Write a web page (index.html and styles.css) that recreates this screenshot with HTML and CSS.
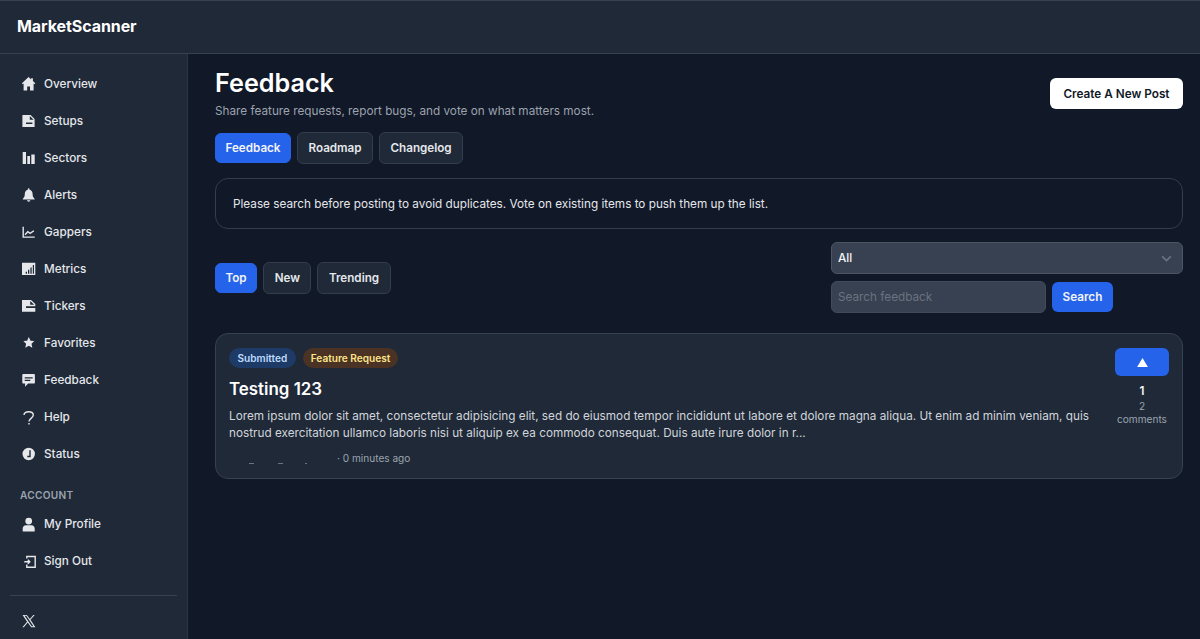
FILE: index.html
```html
<!doctype html>
<html lang="en">
  <head>
    <meta charset="utf-8">
    <title>Feedback - MarketScanner</title>
    <link rel="stylesheet" href="styles.css">
  </head>
  <body>
    <header class="topbar">
      <span class="brand">MarketScanner</span>
    </header>

    <div class="shell">
      <aside class="sidebar">
        <nav class="nav">
          <a class="nav-item" href="#">
            <svg class="nav-icon" viewBox="0 0 16 16"><path d="M8.600 1 1.900 7.300l.9 1 .8-.7v7h3.600v-4h2.800v4h3.600v-7l.8.7.9-1-2.400-2.300V2.200h-1.800v1.400z"/></svg>
            Overview
          </a>
          <a class="nav-item" href="#">
            <svg class="nav-icon" viewBox="0 0 16 16"><path fill-rule="evenodd" d="M2.400 2h8.200l4 4v8H2.400zM9.800 3v3.800h3.800zM6 9.400V11h6.400V9.400z"/></svg>
            Setups
          </a>
          <a class="nav-item" href="#">
            <svg class="nav-icon" viewBox="0 0 16 16"><path d="M2.700 2H6v12H2.700zM7.300 6H10v8H7.300zM11.300 4.500h3.400V14h-3.400z"/></svg>
            Sectors
          </a>
          <a class="nav-item" href="#">
            <svg class="nav-icon" viewBox="0 0 16 16"><path d="M8.700 1.300c.5 0 .9.400.9.900v.5c1.900.5 3 2.100 3 4.200 0 2.500.6 3.400 2 4.800v.9H2.800v-.9c1.400-1.400 2-2.300 2-4.800 0-2.100 1.100-3.700 3-4.200v-.5c0-.5.4-.9.900-.9zM7 13.300h3.400c-.1.900-.8 1.400-1.700 1.400S7.100 14.200 7 13.300z"/></svg>
            Alerts
          </a>
          <a class="nav-item" href="#">
            <svg class="nav-icon nav-icon-line" viewBox="0 0 16 16"><path d="M3.200 2.700v10.400h11.500M5 10.700l2.800-3 2.300 1.700 3.800-2.700"/></svg>
            Gappers
          </a>
          <a class="nav-item" href="#">
            <svg class="nav-icon" viewBox="0 0 16 16"><path fill-rule="evenodd" d="M2 1.800h13.300V14H2zM5.700 10.800v2h1.300v-2zM8 8.800v4h1.300v-4zM10.400 6.600v6.200h1.300V6.600zM12.800 4v8.800H14V4z"/></svg>
            Metrics
          </a>
          <a class="nav-item" href="#">
            <svg class="nav-icon" viewBox="0 0 16 16"><path fill-rule="evenodd" d="M2 2h9l4.300 4v7.700H2zM10.200 3v3.800h4zM6 8.300v1.700h9.300V8.300z"/></svg>
            Tickers
          </a>
          <a class="nav-item" href="#">
            <svg class="nav-icon" viewBox="0 0 16 16"><path d="m8.800 2 1.700 3.700 3.800.4-2.800 2.700.8 3.900-3.500-2-3.500 2 .8-3.900-2.800-2.700 3.800-.4z"/></svg>
            Favorites
          </a>
          <a class="nav-item" href="#">
            <svg class="nav-icon" viewBox="0 0 16 16"><path fill-rule="evenodd" d="M3.500 2h10.400c.7 0 1 .5 1 1.200v7.200c0 .7-.3 1.200-1 1.200H8.100l-3 3.100v-3.100H3.500c-.7 0-1.200-.5-1.200-1.200V3.200C2.300 2.500 2.800 2 3.500 2zM4.700 5.200v1.200h8V5.200zM4.700 7.800V9h5.600V7.800z"/></svg>
            Feedback
          </a>
          <a class="nav-item" href="#">
            <svg class="nav-icon nav-icon-line" viewBox="0 0 16 16"><path d="M4 6C4 4 6 2.800 8.500 2.800s4.800 1.200 4.800 3.300c0 2.800-4 3.200-4.300 6.400"/><path d="M9 14.100v1.300"/></svg>
            Help
          </a>
          <a class="nav-item" href="#">
            <svg class="nav-icon" viewBox="0 0 16 16"><path fill-rule="evenodd" d="M8.700 1.800a6.200 6.200 0 1 1 0 12.400 6.200 6.200 0 0 1 0-12.400zM9.300 4.300v5.500H7.300v1.500h3.400v-7z"/></svg>
            Status
          </a>
        </nav>

        <div class="nav-label">ACCOUNT</div>
        <nav class="nav">
          <a class="nav-item" href="#">
            <svg class="nav-icon" viewBox="0 0 16 16"><path d="M8.700 1.700a3.400 3.400 0 1 1 0 6.800 3.400 3.400 0 0 1 0-6.800zM2.700 15.600v-3c0-2 1.400-3.400 3.200-3.400h5.600c1.800 0 3.200 1.400 3.200 3.400v3z"/></svg>
            My Profile
          </a>
          <a class="nav-item" href="#">
            <svg class="nav-icon nav-icon-line" viewBox="0 0 16 16"><path d="M6.800 5.500V3.500h8.400v10.700H6.800V11.500M4.300 8.800h5.500M7.800 6.800l2 2-2 2"/></svg>
            Sign Out
          </a>
        </nav>

        <div class="sidebar-foot">
          <svg class="x-icon" viewBox="0 0 24 24"><path d="M1 1.500h7.300l5.100 6.900 6-6.900h2.400l-7.300 8.400L23 22.500h-7.300l-5.800-7.800-6.800 7.800H.7l8-9.300zm3.400 1.700 12.200 17.600h3L7.400 3.200z"/></svg>
        </div>
      </aside>

      <main class="main">
        <div class="page-head">
          <div>
            <h1 class="page-title">Feedback</h1>
            <p class="page-sub">Share feature requests, report bugs, and vote on what matters most.</p>
          </div>
          <button class="btn-create">Create A New Post</button>
        </div>

        <div class="tabs tabs-page">
          <a class="pill active" href="#">Feedback</a>
          <a class="pill" href="#">Roadmap</a>
          <a class="pill" href="#">Changelog</a>
        </div>

        <div class="notice">Please search before posting to avoid duplicates. Vote on existing items to push them up the list.</div>

        <div class="toolbar">
          <div class="tabs">
            <a class="pill active" href="#">Top</a>
            <a class="pill" href="#">New</a>
            <a class="pill" href="#">Trending</a>
          </div>
          <div class="filters">
            <div class="select">
              <span>All</span>
              <svg class="chevron" viewBox="0 0 12 12"><path d="M2 4l4 4 4-4"/></svg>
            </div>
            <div class="search-row">
              <input class="search-input" type="text" placeholder="Search feedback">
              <button class="btn-search">Search</button>
            </div>
          </div>
        </div>

        <article class="post">
          <div class="post-body">
            <div class="badges">
              <span class="badge badge-status">Submitted</span>
              <span class="badge badge-type">Feature Request</span>
            </div>
            <h2 class="post-title">Testing 123</h2>
            <p class="post-text">Lorem ipsum dolor sit amet, consectetur adipisicing elit, sed do eiusmod tempor incididunt ut labore et dolore magna aliqua. Ut enim ad minim veniam, quis nostrud exercitation ullamco laboris nisi ut aliquip ex ea commodo consequat. Duis aute irure dolor in r...</p>
            <div class="post-meta">
              <span class="author"><i></i><i></i><i></i></span>
              <span>· 0 minutes ago</span>
            </div>
          </div>
          <div class="vote">
            <button class="vote-btn"><svg viewBox="0 0 12 10"><path d="M6 0l6 10H0z"/></svg></button>
            <div class="vote-count">1</div>
            <div class="vote-comments">2<br>comments</div>
          </div>
        </article>
      </main>
    </div>
  </body>
</html>
```

FILE: styles.css
```css
html, body {
  margin: 0;
  height: 100%;
}

body {
  display: flex;
  flex-direction: column;
  height: 639px;
  overflow: hidden;
  background-color: #111827;
  color: #f3f4f6;
  font-family: Inter, "Liberation Sans", sans-serif;
}

.topbar {
  display: flex;
  align-items: center;
  flex: none;
  box-sizing: border-box;
  height: 54px;
  padding: 0 0 2px 17px;
  background-color: #1f2937;
  border-top: 1px solid #374151;
  border-bottom: 1px solid #374151;
}

.brand {
  color: #fff;
  font-size: 16px;
  font-weight: 700;
  letter-spacing: -0.005em;
}

.shell {
  display: flex;
  flex: 1;
  min-height: 0;
}

.sidebar {
  display: flex;
  flex-direction: column;
  flex: none;
  box-sizing: border-box;
  width: 188px;
  padding-top: 11px;
  background-color: #1f2937;
  border-right: 1px solid #2b3544;
}

.nav {
  display: flex;
  flex-direction: column;
}

.nav-item {
  display: flex;
  align-items: center;
  gap: 8px;
  height: 37px;
  padding-left: 20px;
  color: #e5e7eb;
  font-size: 11.750px;
  font-weight: 500;
  text-decoration: none;
}

.nav-icon {
  width: 16px;
  height: 16px;
  flex: none;
  fill: #e5e7eb;
}

.nav-icon-line {
  fill: none;
  stroke: #e5e7eb;
  stroke-width: 1.400;
}

.nav-label {
  margin-top: 17px;
  margin-bottom: 4px;
  padding-left: 20px;
  color: #9ca3af;
  font-size: 10.100px;
  font-weight: 600;
  letter-spacing: 0.03em;
}

.sidebar-foot {
  margin: 16px 10px 0;
  padding: 18px 0 0 12px;
  border-top: 1px solid #374151;
}

.x-icon {
  display: block;
  width: 14px;
  height: 14px;
  fill: #e5e7eb;
}

.main {
  flex: 1;
  min-width: 0;
  padding: 13px 17px 0 27px;
}

.page-head {
  display: flex;
  justify-content: space-between;
  align-items: flex-start;
}

.page-title {
  margin: 0;
  color: #fff;
  font-size: 25.200px;
  line-height: 33px;
  font-weight: 600;
}

.page-sub {
  margin: 3px 0 0;
  color: #9ca3af;
  font-size: 11.750px;
  line-height: 16px;
}

.btn-create {
  margin-top: 11px;
  height: 31px;
  padding: 0 13.500px;
  background-color: #fff;
  color: #111827;
  border: 0;
  border-radius: 6px;
  font-family: inherit;
  font-size: 11.750px;
  font-weight: 600;
}

.tabs {
  display: flex;
  align-items: center;
  gap: 6px;
}

.tabs-page {
  margin-top: 13px;
}

.pill {
  display: flex;
  align-items: center;
  box-sizing: border-box;
  height: 32px;
  padding: 0 10.500px;
  background-color: #1f2937;
  border: 1px solid #333d4d;
  border-radius: 6px;
  color: #e5e7eb;
  font-size: 11.650px;
  font-weight: 600;
  text-decoration: none;
}

.pill.active {
  height: 30px;
  padding: 0 9.500px;
  background-color: #2563eb;
  border-color: #2563eb;
  color: #f3f4f6;
}

.notice {
  display: flex;
  align-items: center;
  box-sizing: border-box;
  height: 51px;
  margin-top: 14px;
  padding-left: 17px;
  border: 1px solid #333d4d;
  border-radius: 13px;
  color: #e5e7eb;
  font-size: 11.750px;
}

.toolbar {
  display: flex;
  justify-content: space-between;
  align-items: center;
  margin-top: 13px;
}

.filters {
  display: flex;
  flex-direction: column;
  gap: 7px;
  width: 352px;
}

.select {
  display: flex;
  justify-content: space-between;
  align-items: center;
  box-sizing: border-box;
  height: 32px;
  padding: 0 9px 0 6px;
  background-color: #374151;
  border: 1px solid #4b5563;
  border-radius: 6px;
  color: #f3f4f6;
  font-size: 11.750px;
  font-weight: 500;
}

.chevron {
  width: 13px;
  height: 13px;
  fill: none;
  stroke: #6b7280;
  stroke-width: 1.500;
}

.search-row {
  display: flex;
  align-items: center;
  gap: 6px;
}

.search-input {
  box-sizing: border-box;
  width: 215px;
  height: 32px;
  padding: 0 6px;
  background-color: #374151;
  border: 1px solid #414b5a;
  border-radius: 6px;
  color: #f3f4f6;
  font-family: inherit;
  font-size: 11.750px;
}

.search-input::placeholder {
  color: #6b7280;
}

.btn-search {
  height: 30px;
  padding: 0 10.500px;
  background-color: #2563eb;
  color: #f3f4f6;
  border: 0;
  border-radius: 6px;
  font-family: inherit;
  font-size: 11.750px;
  font-weight: 600;
}

.post {
  display: flex;
  justify-content: space-between;
  box-sizing: border-box;
  height: 146px;
  margin-top: 20px;
  padding: 14px 13px 0;
  background-color: #1f2937;
  border: 1px solid #374151;
  border-radius: 13px;
}

.post-body {
  flex: 1;
  min-width: 0;
}

.badges {
  display: flex;
  gap: 7px;
}

.badge {
  display: flex;
  align-items: center;
  box-sizing: border-box;
  height: 20px;
  padding: 0 8.500px 1px;
  border-radius: 10px;
  font-size: 10.100px;
  font-weight: 600;
}

.badge-status {
  background-color: #1e3a66;
  color: #bfdbfe;
}

.badge-type {
  padding: 0 8px 1px;
  background-color: #4a3224;
  color: #fde68a;
}

.post-title {
  margin: 10px 0 0;
  color: #fff;
  font-size: 16.900px;
  line-height: 22px;
  font-weight: 600;
}

.post-text {
  margin: 8px 0 0;
  color: #d1d5db;
  font-size: 11.750px;
  line-height: 17px;
}

.post-meta {
  display: flex;
  align-items: center;
  gap: 3px;
  margin-top: 9px;
  color: #9ca3af;
  font-size: 10.100px;
  line-height: 14px;
}

.author {
  position: relative;
  display: block;
  width: 105px;
  height: 14px;
}

.author i {
  position: absolute;
  bottom: 1px;
  width: 5px;
  height: 1px;
  background-color: #6b7280;
}

.author i:nth-child(1) { left: 20px; }
.author i:nth-child(2) { left: 49px; }
.author i:nth-child(3) { left: 76px; width: 2px; }

.vote {
  display: flex;
  flex-direction: column;
  align-items: center;
  flex: none;
  width: 54px;
  margin-left: 16px;
}

.vote-btn {
  display: flex;
  justify-content: center;
  align-items: center;
  width: 54px;
  height: 28px;
  padding: 0;
  background-color: #2563eb;
  border: 0;
  border-radius: 6px;
}

.vote-btn svg {
  width: 11px;
  height: 9px;
  fill: #fff;
}

.vote-count {
  margin-top: 8px;
  color: #f3f4f6;
  font-size: 11.750px;
  line-height: 15px;
  font-weight: 600;
}

.vote-comments {
  margin-top: 1px;
  color: #9ca3af;
  font-size: 10.100px;
  line-height: 13px;
  text-align: center;
}
```
